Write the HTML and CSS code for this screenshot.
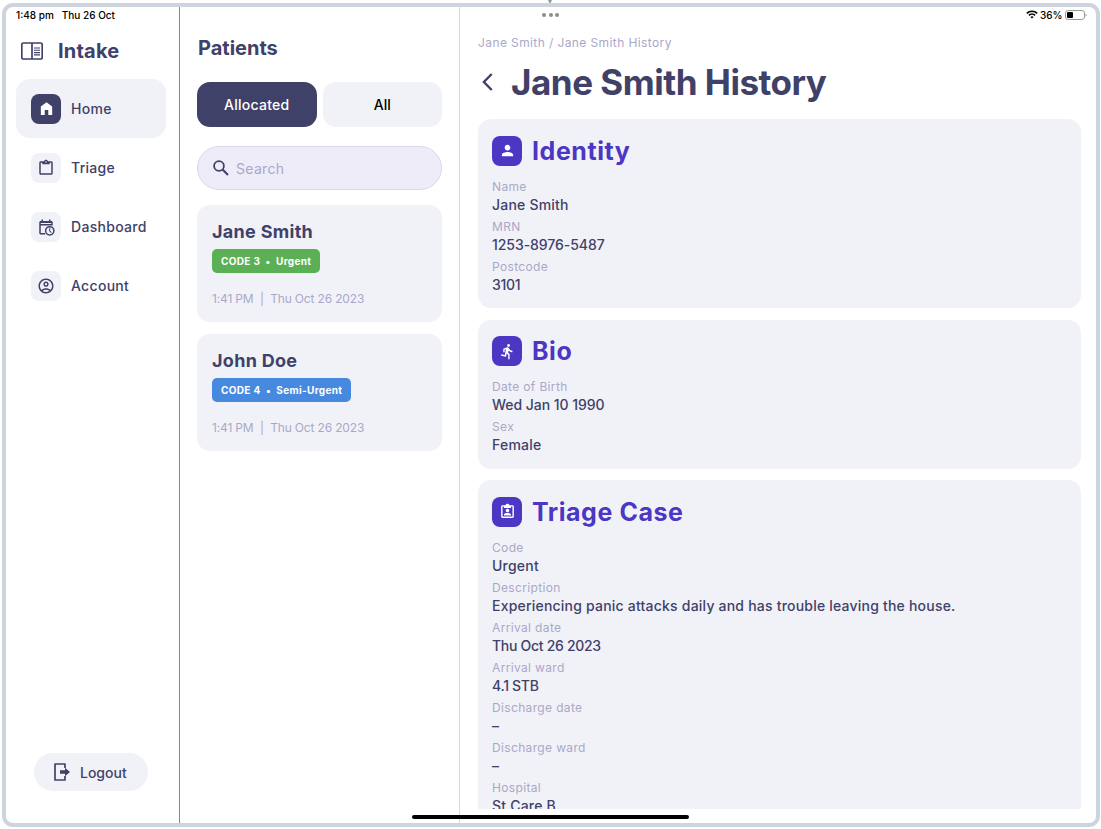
FILE: index.html
```
<!DOCTYPE html>
<html lang="en">
<head>
  <meta charset="UTF-8">
  <meta name="viewport" content="width=device-width, initial-scale=1.0">
  <title>Intake</title>
  <link rel="stylesheet" href="styles.css">
</head>
<body>
  <div class="camera"></div>
  <div class="device">
    <div class="status-bar">
      <div class="status-left"><span>1:48 pm</span><span>Thu 26 Oct</span></div>
      <div class="dots"><i></i><i></i><i></i></div>
      <div class="status-right">
        <svg width="12" height="9" viewBox="0 0 12 9" fill="none" stroke="#000" stroke-width="1.6">
          <path d="M.8 3.4a7.4 7.4 0 0 1 10.4 0M2.9 5.4a4.4 4.4 0 0 1 6.2 0"/>
          <path d="M6 8.6 4.4 7a2.3 2.3 0 0 1 3.2 0z" fill="#000" stroke="none"/>
        </svg>
        <span>36%</span>
        <svg width="22" height="10" viewBox="0 0 22 10">
          <rect x=".5" y=".5" width="19" height="9" rx="2.6" fill="none" stroke="#999"/>
          <rect x="2" y="2" width="6" height="6" rx="1" fill="#000"/>
          <path d="M20.6 3.4v3.2c1.2-.5 1.2-2.7 0-3.2z" fill="#888"/>
        </svg>
      </div>
    </div>

    <nav class="sidebar">
      <div class="brand">
        <svg width="22" height="18" viewBox="0 0 22 18" fill="none" stroke="#404168">
          <rect x=".8" y="1" width="20.4" height="16" rx="1.5" stroke-width="1.7"/>
          <path d="M11 1v16" stroke-width="1.7"/>
          <path d="M13 6h6M13 8.300h6M13 10.600h6M13 12.900h6" stroke-width="1.1"/>
        </svg>
        <h1>Intake</h1>
      </div>
      <a class="nav-item active">
        <span class="nav-icon"><svg viewBox="0 0 24 24"><path d="M12 3 4 9v12h5.500v-7h5v7H20V9z"/></svg></span>
        <span class="nav-text">Home</span>
      </a>
      <a class="nav-item">
        <span class="nav-icon"><svg viewBox="0 0 24 24"><path d="M19 3h-4.180C14.400 1.840 13.300 1 12 1s-2.400.84-2.820 2H5c-1.100 0-2 .9-2 2v14c0 1.100.9 2 2 2h14c1.100 0 2-.9 2-2V5c0-1.100-.9-2-2-2zm-7 0c.55 0 1 .45 1 1s-.45 1-1 1-1-.45-1-1 .45-1 1-1zm7 16H5V5h2v2h10V5h2v14z"/></svg></span>
        <span class="nav-text">Triage</span>
      </a>
      <a class="nav-item">
        <span class="nav-icon"><svg viewBox="0 0 24 24"><path d="M5 10h16V6c0-1.100-.9-2-2-2h-1V2h-2v2H8V2H6v2H5c-1.110 0-2 .9-2 2v14c0 1.100.89 2 2 2h6v-2H5zM5 6.500h14V8H5z" fill-rule="evenodd"/><path d="M17 10.500a6.500 6.500 0 1 0 0 13 6.500 6.500 0 0 0 0-13zm0 11a4.500 4.500 0 1 1 0-9 4.500 4.500 0 0 1 0 9z"/><path d="M17.600 13.700h-1.400v3.700l2.500 2.500.9-.9-2-2z"/></svg></span>
        <span class="nav-text">Dashboard</span>
      </a>
      <a class="nav-item">
        <span class="nav-icon"><svg viewBox="0 0 24 24"><path d="M12 2C6.480 2 2 6.480 2 12s4.480 10 10 10 10-4.480 10-10S17.520 2 12 2zM7.350 18.500C8.660 17.560 10.260 17 12 17s3.340.56 4.650 1.500C15.340 19.440 13.740 20 12 20s-3.340-.56-4.650-1.500zm10.790-1.380C16.450 15.800 14.320 15 12 15s-4.450.8-6.140 2.120C4.700 15.730 4 13.950 4 12c0-4.420 3.580-8 8-8s8 3.580 8 8c0 1.950-.7 3.730-1.860 5.120z"/><path d="M12 6c-1.930 0-3.500 1.570-3.500 3.500S10.070 13 12 13s3.500-1.570 3.500-3.500S13.930 6 12 6zm0 5c-.83 0-1.500-.67-1.500-1.500S11.170 8 12 8s1.500.67 1.500 1.500S12.830 11 12 11z"/></svg></span>
        <span class="nav-text">Account</span>
      </a>
      <a class="logout">
        <svg width="16" height="18" viewBox="0 0 16 18"><path d="M11 5V1H1v16h10v-4" fill="none" stroke="#404168" stroke-width="1.700" stroke-linejoin="round"/><path d="M6 7.300h5V4.700L16 9l-5 4.300v-2.600H6z" fill="#404168"/></svg>
        <span class="nav-text">Logout</span>
      </a>
    </nav>

    <section class="patients">
      <h2>Patients</h2>
      <div class="tabs">
        <button class="tab selected">Allocated</button>
        <button class="tab">All</button>
      </div>
      <div class="search">
        <svg width="16" height="16" viewBox="0 0 16 16" fill="none" stroke="#404168" stroke-width="1.800"><circle cx="6" cy="6" r="4.900"/><path d="m9.600 9.600 5.400 5.400" stroke-width="2.100"/></svg>
        <span>Search</span>
      </div>
      <div class="patient">
        <h3>Jane Smith</h3>
        <div class="badge green">CODE 3 &nbsp;•&nbsp; Urgent</div>
        <p class="time">1:41 PM &nbsp;|&nbsp; Thu Oct 26 2023</p>
      </div>
      <div class="patient">
        <h3>John Doe</h3>
        <div class="badge blue">CODE 4 &nbsp;•&nbsp; Semi-Urgent</div>
        <p class="time">1:41 PM &nbsp;|&nbsp; Thu Oct 26 2023</p>
      </div>
    </section>

    <main class="history">
      <p class="crumbs">Jane Smith / Jane Smith History</p>
      <div class="title">
        <svg width="12" height="18" viewBox="0 0 12 18" fill="none" stroke="#404168" stroke-width="2.400"><path d="M9.700 1 1.900 9l7.800 8"/></svg>
        <h1>Jane Smith History</h1>
      </div>
      <div class="cards">
        <div class="card">
          <div class="card-head">
            <span class="card-icon"><svg viewBox="0 0 24 24"><path d="M12 12c2.210 0 4-1.790 4-4s-1.790-4-4-4-4 1.790-4 4 1.790 4 4 4zm0 2c-2.670 0-8 1.340-8 4v2h16v-2c0-2.660-5.330-4-8-4z"/></svg></span>
            <h2>Identity</h2>
          </div>
          <dl>
            <dt>Name</dt><dd>Jane Smith</dd>
            <dt>MRN</dt><dd class="num">1253-8976-5487</dd>
            <dt>Postcode</dt><dd class="date">3101</dd>
          </dl>
        </div>
        <div class="card">
          <div class="card-head">
            <span class="card-icon"><svg viewBox="0 0 24 24"><path d="M13.490 5.480c1.100 0 2-.9 2-2s-.9-2-2-2-2 .9-2 2 .9 2 2 2zm-3.600 13.900 1-4.400 2.100 2v6h2v-7.500l-2.100-2 .6-3c1.300 1.500 3.300 2.500 5.500 2.500v-2c-1.900 0-3.500-1-4.300-2.400l-1-1.600c-.4-.6-1-1-1.700-1-.3 0-.5.1-.8.1l-5.200 2.200v4.700h2v-3.400l1.800-.7-1.600 8.100-4.900-1-.4 2 7 1.400z"/></svg></span>
            <h2>Bio</h2>
          </div>
          <dl>
            <dt>Date of Birth</dt><dd class="num">Wed Jan 10 1990</dd>
            <dt>Sex</dt><dd>Female</dd>
          </dl>
        </div>
        <div class="card">
          <div class="card-head">
            <span class="card-icon"><svg viewBox="0 0 24 24"><path d="M19 3h-4.180C14.400 1.840 13.300 1 12 1s-2.400.84-2.820 2H5c-1.100 0-2 .9-2 2v14c0 1.100.9 2 2 2h14c1.100 0 2-.9 2-2V5c0-1.100-.9-2-2-2zm0 16H5V5h2v2h10V5h2v14z"/><path d="M12 13c1.400 0 2.500-1.100 2.500-2.500S13.400 8 12 8s-2.500 1.100-2.500 2.500S10.600 13 12 13zm-5 4.500h10v-1.300c0-1.600-3.300-2.200-5-2.200s-5 .6-5 2.200z"/></svg></span>
            <h2>Triage Case</h2>
          </div>
          <dl>
            <dt>Code</dt><dd>Urgent</dd>
            <dt>Description</dt><dd>Experiencing panic attacks daily and has trouble leaving the house.</dd>
            <dt>Arrival date</dt><dd class="date">Thu Oct 26 2023</dd>
            <dt>Arrival ward</dt><dd class="date">4.1 STB</dd>
            <dt>Discharge date</dt><dd>–</dd>
            <dt>Discharge ward</dt><dd>–</dd>
            <dt>Hospital</dt><dd>St Care B</dd>
          </dl>
        </div>
      </div>
    </main>
    <div class="home-bar"></div>
  </div>
</body>
</html>
```
FILE: styles.css
```
* {
  box-sizing: border-box;
}
body {
  margin: 0;
  height: 829px;
  padding: 3px 1px 2px 2px;
  overflow: hidden;
  background: #fff;
  color: #404168;
  font-family: Inter, "Open Sans", sans-serif;
  font-size: 14px;
}
h1, h2, h3, p, dl, dd {
  margin: 0;
}
.device {
  position: relative;
  display: flex;
  height: 824px;
  border: 4px solid #cdd4dd;
  border-radius: 11px;
  overflow: hidden;
}
.camera {
  position: absolute;
  top: 0;
  left: 548px;
  border: 2.5px solid transparent;
  border-top: 4px solid #8e959f;
}

/* status bar */
.status-bar {
  position: absolute;
  top: 1px;
  left: 10px;
  right: 9px;
  height: 13px;
  display: flex;
  justify-content: space-between;
  align-items: center;
  color: #000;
  font-size: 10px;
  font-weight: 500;
}
.status-left {
  display: flex;
  gap: 8px;
}
.status-right {
  display: flex;
  align-items: center;
  gap: 2.5px;
}
.dots {
  position: absolute;
  left: 526px;
  top: 5px;
  display: flex;
  gap: 2.5px;
}
.dots i {
  width: 4px;
  height: 4px;
  border-radius: 50%;
  background: #8c8c8c;
}
.home-bar {
  position: absolute;
  left: 406px;
  bottom: 4px;
  width: 277px;
  height: 4px;
  border-radius: 2px;
  background: #000;
}

/* sidebar */
.sidebar {
  width: 174px;
  padding: 29px 13px 32px 10px;
  border-right: 1px solid #86868a;
  display: flex;
  flex-direction: column;
}
.brand {
  display: flex;
  align-items: center;
  gap: 15px;
  height: 29px;
  margin: 0 0 14px 5px;
}
.brand h1 {
  font-size: 20px;
  letter-spacing: 0.2px;
}
.nav-item {
  display: flex;
  align-items: center;
  gap: 10px;
  height: 59px;
  padding-left: 15px;
  border-radius: 14px;
}
.nav-item.active {
  background: #f1f2f8;
}
.nav-icon {
  width: 30px;
  height: 30px;
  border-radius: 8px;
  background: #f1f2f8;
  display: flex;
  align-items: center;
  justify-content: center;
}
.nav-icon svg {
  width: 18px;
  height: 18px;
  fill: #404168;
}
.active .nav-icon {
  background: #404168;
}
.active .nav-icon svg {
  width: 17px;
  height: 17px;
  fill: #fff;
}
.nav-text {
  font-weight: 500;
  letter-spacing: 0.3px;
}
.logout {
  width: 114px;
  height: 38px;
  margin: auto 0 0 18px;
  padding-left: 20px;
  border-radius: 19px;
  background: #f1f2f8;
  display: flex;
  align-items: center;
  gap: 10px;
}
.logout .nav-text {
  letter-spacing: 0;
}

/* patient list */
.patients {
  width: 280px;
  padding: 27px 17px 0;
  border-right: 1px solid #d9d9dc;
}
.patients h2 {
  padding-left: 1px;
  font-size: 20px;
  line-height: 28px;
}
.tabs {
  display: flex;
  gap: 6px;
  margin-top: 20px;
}
.tab {
  flex: 1;
  height: 45px;
  border: none;
  border-radius: 13px;
  background: #f1f2f8;
  color: #000;
  font: inherit;
  font-weight: 500;
}
.tab.selected {
  background: #404168;
  color: #fff;
  letter-spacing: 0.25px;
}
.search {
  display: flex;
  align-items: center;
  gap: 7px;
  height: 44px;
  margin: 19px 0 15px;
  padding-left: 15px;
  border: 1px solid #d9d7ec;
  border-radius: 23px;
  background: #eeecf9;
  color: #a9a8c8;
  letter-spacing: 0.3px;
}
.patient {
  height: 117px;
  margin-bottom: 11.5px;
  padding: 14px 15px;
  border-radius: 13px;
  background: #f1f2f8;
}
.patient h3 {
  font-size: 18px;
  line-height: 25px;
  letter-spacing: 0.3px;
}
.badge {
  width: fit-content;
  height: 24px;
  margin-top: 5px;
  padding: 0 9px;
  border-radius: 5px;
  color: #fff;
  font-size: 10px;
  font-weight: 700;
  line-height: 24px;
  letter-spacing: 0.33px;
}
.green {
  background: #5bb055;
}
.blue {
  background: #4889e0;
}
.time {
  margin-top: 17px;
  color: #a9a8c8;
  font-size: 12px;
  line-height: 18px;
  letter-spacing: -0.16px;
}

/* history */
.history {
  flex: 1;
  display: flex;
  flex-direction: column;
  padding: 27px 15.5px 14px 18px;
}
.crumbs {
  color: #a9a8c8;
  font-size: 12px;
  line-height: 18px;
  letter-spacing: 0.4px;
}
.title {
  display: flex;
  align-items: center;
  gap: 17px;
  height: 60px;
  padding-left: 4px;
}
.title h1 {
  font-size: 35px;
  letter-spacing: -0.48px;
}
.cards {
  flex: 1;
  min-height: 0;
  margin-top: 7.3px;
  overflow: hidden;
}
.card {
  margin-bottom: 11.5px;
  padding: 16.5px 14px 14.5px;
  border-radius: 13px;
  background: #f1f2f8;
}
.card-head {
  display: flex;
  align-items: center;
  gap: 10px;
  height: 30px;
  margin-bottom: 12px;
}
.card-icon {
  width: 30px;
  height: 30px;
  border-radius: 8px;
  background: #4c36c4;
  display: flex;
  align-items: center;
  justify-content: center;
}
.card-icon svg {
  width: 17px;
  height: 17px;
  fill: #fff;
}
.card h2 {
  color: #4c36c4;
  font-size: 25px;
  letter-spacing: 0.55px;
}
dt {
  color: #a9a8c8;
  font-size: 12px;
  line-height: 18px;
  letter-spacing: 0.35px;
}
dd {
  margin-bottom: 4px;
  font-weight: 500;
  line-height: 18px;
  letter-spacing: 0.21px;
}
dd.num {
  letter-spacing: -0.05px;
}
dd.date {
  letter-spacing: -0.3px;
}
dd:last-child {
  margin-bottom: 0;
}
```
